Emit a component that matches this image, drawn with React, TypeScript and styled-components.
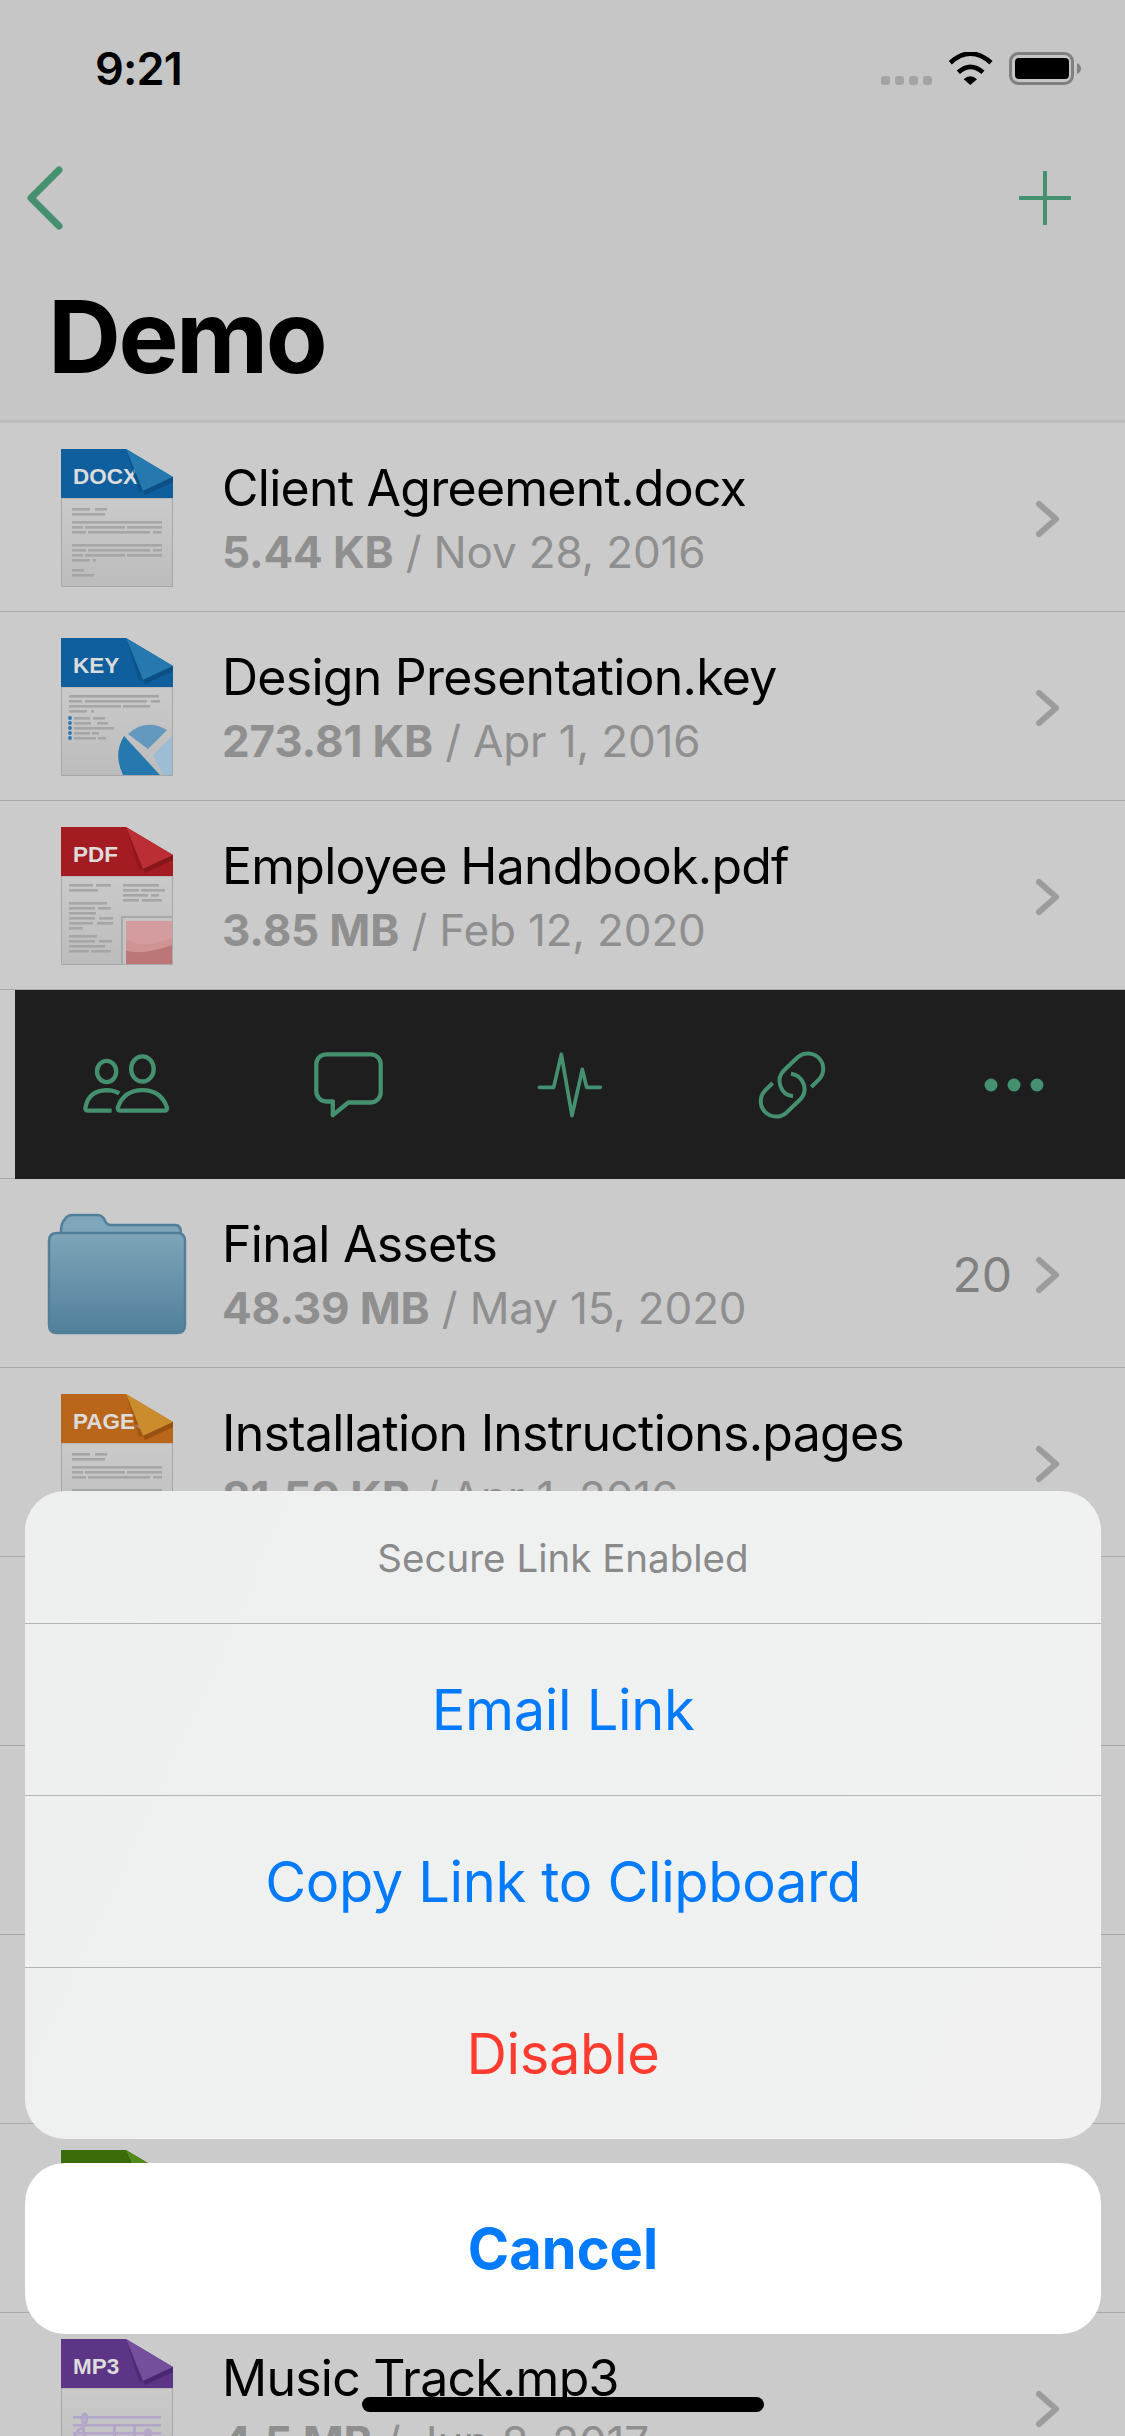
import React from 'react'
import styled, { createGlobalStyle } from 'styled-components'

const GREEN = '#45916f'
const FONT = 'Inter, "Noto Sans", "Liberation Sans", sans-serif'

const GlobalStyle = createGlobalStyle`
  html, body {
    margin: 0;
    padding: 0;
    background: #cbcbcb;
  }
  * {
    box-sizing: border-box;
  }
`

const Screen = styled.div`
  position: relative;
  width: 1125px;
  height: 2436px;
  overflow: hidden;
  background: #cbcbcb;
  font-family: ${FONT};
  color: #000;
`

const Header = styled.header`
  height: 423px;
  background: #c6c6c6;
  border-bottom: 3px solid #bcbcbc;
`

const StatusBar = styled.div`
  height: 132px;
  padding: 45px 43px 0 95px;
  display: flex;
  justify-content: space-between;
  align-items: flex-start;
`

const Time = styled.span`
  font-size: 45px;
  line-height: 48px;
  font-weight: 600;
  letter-spacing: -0.8px;
`

const StatusIcons = styled.div`
  display: flex;
  align-items: flex-start;
  padding-top: 7px;
`

const NavBar = styled.nav`
  height: 132px;
  padding: 0 54px 0 26px;
  display: flex;
  justify-content: space-between;
  align-items: center;
`

const Title = styled.h1`
  margin: 0;
  padding: 17px 0 0 48px;
  font-size: 101px;
  line-height: 110px;
  font-weight: 700;
  letter-spacing: -2.5px;
`

const RowWrap = styled.div`
  height: 189px;
  border-bottom: 1px solid #a9a9a9;
  display: flex;
  align-items: flex-start;
`

const IconCell = styled.div`
  width: 222px;
  height: 188px;
  flex: none;
  padding: 2px 0 0 12px;
  display: flex;
  justify-content: center;
  align-items: center;
`

const RowText = styled.div`
  flex: 1;
  min-width: 0;
  padding-top: 35px;
`

const FileName = styled.div`
  font-size: 50px;
  line-height: 60px;
  letter-spacing: -0.75px;
  white-space: nowrap;
`

const FileMeta = styled.div`
  margin-top: 4px;
  font-size: 44px;
  line-height: 60px;
  letter-spacing: -0.15px;
  color: #8f8f8f;
  white-space: nowrap;
  b {
    font-weight: 700;
  }
`

const RowEnd = styled.div`
  width: 190px;
  height: 188px;
  flex: none;
  padding: 3px 64px 0 0;
  display: flex;
  align-items: center;
  justify-content: flex-end;
  gap: 23px;
`

const Count = styled.span`
  font-size: 48px;
  color: #808080;
  white-space: nowrap;
`

const ToolWrap = styled.div`
  height: 189px;
  padding-left: 15px;
  border-bottom: 1px solid #a9a9a9;
`

const Toolbar = styled.div`
  height: 189px;
  background: #1e1e1e;
  display: grid;
  grid-template-columns: repeat(5, 1fr);
  align-items: center;
  justify-items: center;
`

const Sheet = styled.div`
  position: absolute;
  left: 25px;
  top: 1491px;
  width: 1076px;
`

const SheetGroup = styled.div`
  border-radius: 40px;
  overflow: hidden;
  background: linear-gradient(115deg, #eef0ef 0%, #eff1f1 40%, #f1f1f1 100%);
`

const SheetHeading = styled.div`
  height: 132px;
  padding-top: 2px;
  display: flex;
  align-items: center;
  justify-content: center;
  font-size: 38.5px;
  color: #8a8a8a;
`

const SheetAction = styled.div<{ $danger?: boolean }>`
  height: 172px;
  border-top: 1px solid #b4b6b6;
  display: flex;
  align-items: center;
  justify-content: center;
  font-size: 56px;
  letter-spacing: -0.35px;
  color: ${(p) => (p.$danger ? '#ff3b30' : '#007aff')};
`

const CancelButton = styled.div`
  margin-top: 24px;
  height: 171px;
  border-radius: 40px;
  background: #fff;
  display: flex;
  align-items: center;
  justify-content: center;
  font-size: 56px;
  font-weight: 700;
  color: #007aff;
`

const HomeBar = styled.div`
  position: absolute;
  left: 362px;
  top: 2397px;
  width: 402px;
  height: 15px;
  border-radius: 8px;
  background: #000;
`

type DocKind = 'docx' | 'key' | 'pdf' | 'pages' | 'numbers' | 'mp3'

const DOCS: Record<DocKind, { band: string; fold: string; shade: string; label: string }> = {
  docx: { band: '#0f5f9e', fold: '#2579ae', shade: '#0b4f85', label: 'DOCX' },
  key: { band: '#0f5f9e', fold: '#2579ae', shade: '#0b4f85', label: 'KEY' },
  pdf: { band: '#a41c22', fold: '#bb2e35', shade: '#87161b', label: 'PDF' },
  pages: { band: '#b9661a', fold: '#cb8c2e', shade: '#96500f', label: 'PAGES' },
  numbers: { band: '#3a6c0a', fold: '#528a1c', shade: '#2e5807', label: '' },
  mp3: { band: '#5d3586', fold: '#764f9c', shade: '#4a2870', label: 'MP3' },
}

const Lines = ({ rows, color = '#a6a6a6' }: { rows: number[][]; color?: string }) => (
  <g fill={color}>
    {rows.map(([x, y, w], i) => (
      <rect key={i} x={x} y={y} width={w} height={2.6} />
    ))}
  </g>
)

const LETTER_LINES = [
  [11, 59, 18], [34, 59, 12], [11, 64, 33],
  [11, 72, 90], [11, 77, 11], [24, 77, 40], [66, 77, 35], [11, 82, 14], [27, 82, 62], [92, 82, 9],
  [11, 95, 90], [11, 100, 14], [27, 100, 62], [92, 100, 9], [11, 105, 11], [24, 105, 40], [66, 105, 35], [11, 110, 18], [32, 110, 3],
  [11, 120, 12], [11, 125, 22],
]

const DocArt = ({ kind }: { kind: DocKind }) => {
  if (kind === 'key') {
    return (
      <>
        <Lines rows={[[8, 57, 90], [8, 62, 13], [24, 62, 62], [90, 62, 9], [8, 67, 12], [20, 67, 40], [62, 67, 27], [8, 72, 18], [30, 72, 3]]} />
        <Lines rows={[[13, 79, 16], [32, 79, 12], [13, 84, 17], [36, 84, 11], [13, 89, 40], [13, 94, 16], [31, 94, 7], [13, 99, 22], [37, 99, 8]]} />
        <g fill="#2579ae">
          <circle cx={9} cy={80} r={1.9} />
          <circle cx={9} cy={85} r={1.9} />
          <circle cx={9} cy={90} r={1.9} />
          <circle cx={9} cy={95} r={1.9} />
          <circle cx={9} cy={100} r={1.9} />
        </g>
        <path d="M63 98 Q52 116 62 137 H99 Z" fill="#2579ae" />
        <path d="M67 96 Q85 80 106 92 L87 111 Z" fill="#6298bd" />
        <path d="M111 98 L92 117 L102 137 H111 Z" fill="#9dbdd4" />
      </>
    )
  }
  if (kind === 'pdf') {
    return (
      <>
        <Lines rows={[[8, 57, 24], [35, 57, 15], [8, 62, 29], [62, 57, 36], [62, 62, 16], [80, 62, 24], [62, 67, 25], [90, 67, 8], [62, 72, 16], [81, 72, 20]]} />
        <Lines rows={[[8, 75, 38], [8, 80, 26], [37, 80, 13], [8, 85, 27], [8, 90, 26], [38, 90, 14], [8, 95, 24], [36, 95, 16], [8, 100, 14], [8, 108, 28], [8, 113, 26], [38, 113, 13], [8, 118, 36], [8, 123, 20], [30, 123, 20]]} />
        <rect x={61} y={90} width={51} height={48} fill="#c4c4c4" stroke="#a8a8a8" strokeWidth={2} />
        <rect x={65} y={94} width={46} height={43} fill="#d49c9e" />
        <path d="M65 112 Q85 124 111 110 V137 H65 Z" fill="#cf9394" />
        <path d="M65 124 Q85 128 111 118 V137 H65 Z" fill="#bc7678" />
      </>
    )
  }
  if (kind === 'mp3') {
    return (
      <>
        <g fill="#b3a6c9">
          <rect x={12} y={77} width={88} height={2.6} />
          <rect x={12} y={85} width={88} height={2.6} />
          <rect x={12} y={93} width={88} height={2.6} />
          <rect x={12} y={101} width={88} height={2.6} />
          <rect x={12} y={109} width={88} height={2.6} />
          <rect x={52} y={85} width={3} height={30} />
          <rect x={72} y={85} width={3} height={30} />
          <circle cx={87} cy={94} r={4.5} />
        </g>
        <path d="M27 112 C10 112 10 94 22 88 C28 82 26 72 22 76 C20 84 26 104 24 118" fill="none" stroke="#b3a6c9" strokeWidth={3} />
      </>
    )
  }
  return <Lines rows={LETTER_LINES} />
}

const DocIcon = ({ kind }: { kind: DocKind }) => {
  const doc = DOCS[kind]
  return (
    <svg width={112} height={138} viewBox="0 0 112 138">
      <defs>
        <linearGradient id={`paper-${kind}`} x1="0" y1="0" x2="0" y2="1">
          <stop offset="0" stopColor="#cacaca" />
          <stop offset="1" stopColor="#bcbcbc" />
        </linearGradient>
      </defs>
      <path d="M0.5 49 H111.5 V137.5 H0.5 Z" fill={`url(#paper-${kind})`} stroke="#a6a6a6" />
      <DocArt kind={kind} />
      <path d="M0 0 H65 L112 28 V49 H0 Z" fill={doc.band} />
      <text x={12} y={35} fontFamily='"Liberation Sans", Arial, sans-serif' fontWeight={700} fontSize={22.5} fill="#dcdcdc">
        {doc.label}
      </text>
      <path d="M65 0 L112 28 L82 42 Z" fill={doc.fold} />
      <path d="M112 28 L82 42 L84 46 L112 33 Z" fill={doc.shade} />
      <path d="M65 0 L82 42 L78 43 Z" fill={doc.shade} opacity={0.7} />
    </svg>
  )
}

const FolderIcon = () => (
  <svg width={140} height={122} viewBox="0 0 140 122">
    <defs>
      <linearGradient id="folder-fill" x1="0" y1="0" x2="0" y2="1">
        <stop offset="0" stopColor="#7ea5b9" />
        <stop offset="1" stopColor="#517f9a" />
      </linearGradient>
    </defs>
    <path
      d="M14 18 Q14 10 18 6 Q20 2 26 2 H50 Q56 2 58 8 Q60 12 64 12 H128 Q134 12 134 20 V30 H14 Z"
      fill="#7ea5b9"
      stroke="#517f9a"
      strokeWidth={2.5}
    />
    <path
      d="M2 28 Q2 20 10 20 H130 Q138 20 138 28 V112 Q138 120 130 120 H10 Q2 120 2 112 Z"
      fill="url(#folder-fill)"
      stroke="#517f9a"
      strokeWidth={2.5}
    />
  </svg>
)

const Chevron = () => (
  <svg width={26} height={38} viewBox="0 0 26 38" fill="none">
    <path d="M4 4 L21 19 L4 34" stroke="#9c9c9c" strokeWidth={6} strokeLinecap="round" strokeLinejoin="round" />
  </svg>
)

const SignalDots = () => (
  <svg width={66} height={33} viewBox="0 0 66 33" fill="#a4a4a4">
    <rect x={0} y={24} width={9} height={9} rx={3} />
    <rect x={14} y={24} width={9} height={9} rx={3} />
    <rect x={28} y={24} width={9} height={9} rx={3} />
    <rect x={42} y={24} width={9} height={9} rx={3} />
  </svg>
)

const WifiIcon = () => (
  <svg width={62} height={33} viewBox="262 36 186 99" fill="none">
    <path d="M272 68 Q332 14 394 68" stroke="#000" strokeWidth={14} />
    <path d="M296 97 Q332 64 370 97" stroke="#000" strokeWidth={14} />
    <path d="M312 118 Q332 100 352 118 L332 135 Z" fill="#000" />
  </svg>
)

const BatteryIcon = () => (
  <svg width={73} height={33} viewBox="0 0 73 33">
    <rect x={1.5} y={1.5} width={62} height={30} rx={8} fill="none" stroke="#808080" strokeWidth={3} />
    <rect x={6} y={6} width={54} height={21} rx={4} fill="#000" />
    <path d="M68 11 Q72 13 72 16.5 Q72 20 68 22 Z" fill="#808080" />
  </svg>
)

const BackIcon = () => (
  <svg width={40} height={66} viewBox="0 0 40 66" fill="none">
    <path d="M33 5 L5 33 L33 61" stroke={GREEN} strokeWidth={7} strokeLinecap="round" strokeLinejoin="round" />
  </svg>
)

const PlusIcon = () => (
  <svg width={52} height={54} viewBox="0 0 52 54" fill="none">
    <path d="M26 1 V53 M1 27 H51" stroke={GREEN} strokeWidth={4} strokeLinecap="round" />
  </svg>
)

const PeopleIcon = () => (
  <svg width={93} height={63} viewBox="60 70 280 190" fill="none" stroke={GREEN} strokeWidth={13}>
    <ellipse cx={140} cy={126} rx={29} ry={32} />
    <ellipse cx={248} cy={118} rx={34} ry={38} />
    <path d="M155 244 H84 Q76 244 76 236 Q84 184 140 182 Q162 182 178 192" strokeLinejoin="round" />
    <path d="M182 244 H314 Q324 244 322 234 Q304 182 248 182 Q192 182 174 234 Q172 244 182 244 Z" strokeLinejoin="round" />
  </svg>
)

const BubbleIcon = () => (
  <svg width={71} height={69} viewBox="755 60 215 207" fill="none" stroke={GREEN} strokeWidth={13} strokeLinejoin="round">
    <path d="M795 72 H930 a30 30 0 0 1 30 30 V188 a30 30 0 0 1 -30 30 H862 L815 256 V215 H795 a30 30 0 0 1 -30 -30 V102 a30 30 0 0 1 30 -30 Z" />
  </svg>
)

const PulseIcon = () => (
  <svg width={68} height={68} viewBox="110 60 204 204" fill="none" stroke={GREEN} strokeWidth={11} strokeLinecap="round" strokeLinejoin="round">
    <path d="M120 169 H163 L186 70 L218 254 L249 115 L262 169 H303" />
  </svg>
)

const LinkIcon = () => (
  <svg width={68} height={68} viewBox="775 60 204 204" fill="none" stroke={GREEN} strokeWidth={12}>
    <path d="M935 168 L958 145 A46 46 0 0 0 894 79 L854 117 A46 46 0 0 0 880 196" />
    <path d="M819 156 L796 179 A46 46 0 0 0 860 245 L900 207 A46 46 0 0 0 874 128" />
  </svg>
)

const DotsIcon = () => (
  <svg width={60} height={14} viewBox="0 0 60 14" fill={GREEN}>
    <circle cx={7} cy={7} r={6.5} />
    <circle cx={30} cy={7} r={6.5} />
    <circle cx={53} cy={7} r={6.5} />
  </svg>
)

type RowProps = {
  icon: React.ReactNode
  name?: string
  size?: string
  date?: string
  count?: number
  bare?: boolean
}

const FileRow = ({ icon, name, size, date, count, bare }: RowProps) => (
  <RowWrap>
    <IconCell>{icon}</IconCell>
    <RowText>
      {name && <FileName>{name}</FileName>}
      {size && (
        <FileMeta>
          <b>{size}</b> / {date}
        </FileMeta>
      )}
    </RowText>
    {!bare && (
      <RowEnd>
        {count !== undefined && <Count>{count}</Count>}
        <Chevron />
      </RowEnd>
    )}
  </RowWrap>
)

const App = () => {
  return (
    <Screen>
      <GlobalStyle />
      <Header>
        <StatusBar>
          <Time>9:21</Time>
          <StatusIcons>
            <SignalDots />
            <WifiIcon />
            <BatteryIcon />
          </StatusIcons>
        </StatusBar>
        <NavBar>
          <BackIcon />
          <PlusIcon />
        </NavBar>
        <Title>Demo</Title>
      </Header>

      <FileRow icon={<DocIcon kind="docx" />} name="Client Agreement.docx" size="5.44 KB" date="Nov 28, 2016" />
      <FileRow icon={<DocIcon kind="key" />} name="Design Presentation.key" size="273.81 KB" date="Apr 1, 2016" />
      <FileRow icon={<DocIcon kind="pdf" />} name="Employee Handbook.pdf" size="3.85 MB" date="Feb 12, 2020" />

      <ToolWrap>
        <Toolbar>
          <PeopleIcon />
          <BubbleIcon />
          <PulseIcon />
          <LinkIcon />
          <DotsIcon />
        </Toolbar>
      </ToolWrap>

      <FileRow icon={<FolderIcon />} name="Final Assets" size="48.39 MB" date="May 15, 2020" count={20} />
      <FileRow icon={<DocIcon kind="pages" />} name="Installation Instructions.pages" size="81.59 KB" date="Apr 1, 2016" />
      <FileRow icon={null} bare />
      <FileRow icon={null} bare />
      <FileRow icon={null} bare />
      <FileRow icon={<DocIcon kind="numbers" />} bare />
      <FileRow icon={<DocIcon kind="mp3" />} name="Music Track.mp3" size="4.5 MB" date="Jun 8, 2017" />

      <Sheet>
        <SheetGroup>
          <SheetHeading>Secure Link Enabled</SheetHeading>
          <SheetAction>Email Link</SheetAction>
          <SheetAction>Copy Link to Clipboard</SheetAction>
          <SheetAction $danger>Disable</SheetAction>
        </SheetGroup>
        <CancelButton>Cancel</CancelButton>
      </Sheet>
      <HomeBar />
    </Screen>
  )
}

export default App
